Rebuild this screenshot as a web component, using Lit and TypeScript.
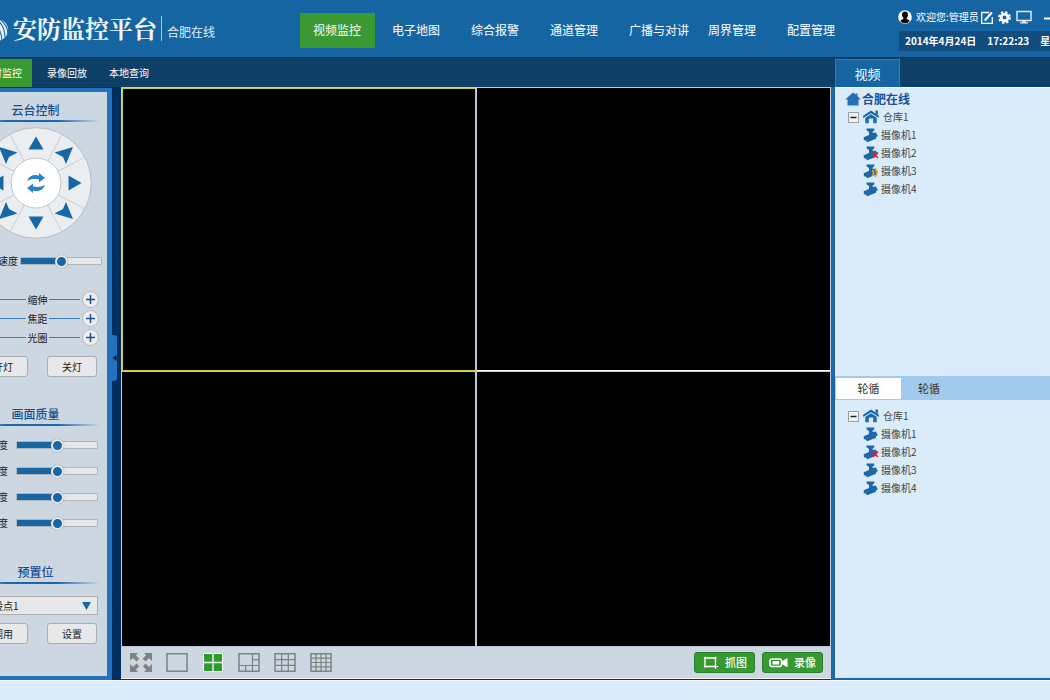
import { LitElement, html, svg, css, nothing } from "lit";
import { customElement, property, state } from "lit/decorators.js";
import { classMap } from "lit/directives/class-map.js";
import { styleMap } from "lit/directives/style-map.js";

const NAV = ["视频监控", "电子地图", "综合报警", "通道管理", "广播与对讲", "周界管理", "配置管理"];
const SUBNAV = ["实时监控", "录像回放", "本地查询"];

type CameraStatus = "ok" | "offline" | "alarm";
interface Camera {
  name: string;
  status: CameraStatus;
}

const LIVE: Camera[] = [
  { name: "摄像机1", status: "ok" },
  { name: "摄像机2", status: "offline" },
  { name: "摄像机3", status: "alarm" },
  { name: "摄像机4", status: "ok" },
];
const PATROL: Camera[] = [
  { name: "摄像机1", status: "ok" },
  { name: "摄像机2", status: "offline" },
  { name: "摄像机3", status: "ok" },
  { name: "摄像机4", status: "ok" },
];

const reset = css`
  * {
    box-sizing: border-box;
  }
  button {
    margin: 0;
    padding: 0;
    border: 0;
    background: none;
    font: inherit;
    color: inherit;
    cursor: pointer;
  }
  a {
    color: inherit;
    text-decoration: none;
  }
  svg {
    display: block;
    flex: none;
  }
`;

@customElement("app-header")
class AppHeader extends LitElement {
  @state() active = 0;

  static styles = [
    reset,
    css`
      :host {
        display: grid;
        grid-template-columns: 340px 1fr 212px;
        height: 57px;
        background: #1665a3;
        color: #fff;
      }
      .brand {
        display: flex;
        align-items: flex-start;
        padding: 16px 0 0 28px;
      }
      .logo {
        margin: 2px 4px 0 0;
      }
      .title {
        margin: 0;
        font: 700 24px/24px "Noto Serif CJK SC", "Noto Sans CJK SC", sans-serif;
        color: #eef5fb;
        white-space: nowrap;
      }
      .site {
        margin-left: 4px;
        padding: 8px 0 0 5px;
        height: 25px;
        border-left: 1px solid #a9c9e3;
        font-size: 12px;
        line-height: 16px;
        color: #e2eef8;
        white-space: nowrap;
      }
      .nav {
        display: flex;
        gap: 4px;
        padding-top: 13px;
      }
      .nav a {
        flex: none;
        width: 75px;
        height: 35px;
        padding-left: 13px;
        font-size: 12px;
        line-height: 33px;
        white-space: nowrap;
      }
      .nav a.on {
        background: #3a9933;
      }
      .user {
        display: flex;
        align-items: center;
        height: 16px;
        margin-top: 9px;
        font-size: 10px;
        line-height: 16px;
        white-space: nowrap;
      }
      .hello {
        width: 65px;
        margin-left: 4px;
      }
      .tools {
        display: flex;
        align-items: center;
        gap: 5px;
      }
      .clock {
        display: flex;
        gap: 11px;
        margin: 6px 0 0 1px;
        padding-left: 6px;
        height: 20px;
        background: #134d7f;
        font-size: 10px;
        font-weight: 700;
        line-height: 20px;
        white-space: nowrap;
      }
    `,
  ];

  render() {
    return html`
      <div class="brand">
        <svg class="logo" width="21" height="23" viewBox="0 0 21 23">
          <circle cx="9" cy="12" r="11" fill="#e8f2fa" />
          <path d="M-2 2C8 4 13 10 14 23M3-1C12 3 17 8 17 20M-2 8C5 9 9 14 10 24M9-1C15 3 20 8 20 16" fill="none" stroke="#1665a3" stroke-width="1.100" />
        </svg>
        <h1 class="title">安防监控平台</h1>
        <span class="site">合肥在线</span>
      </div>
      <nav class="nav">
        ${NAV.map(
          (n, i) => html`<a href="#" class=${classMap({ on: i === this.active })} @click=${(e: Event) => { e.preventDefault(); this.active = i; }}>${n}</a>`
        )}
      </nav>
      <div>
        <div class="user">
          <svg width="14" height="14" viewBox="0 0 14 14">
            <circle cx="7" cy="7" r="6.8" fill="#fff" />
            <path d="M7 1.6c2.2 0 3.2 1.4 3 3.4-.1 1.3-.8 2.3-1.3 3v1c1.400.5 2.500 1 3 2.100A6.200 6.200 0 0 1 7 13.300 6.200 6.200 0 0 1 2.300 11.100c.5-1.100 1.600-1.600 3-2.100v-1C4.800 7.300 4.100 6.300 4 5c-.2-2 .8-3.400 3-3.400z" fill="#0a0a0a" />
          </svg>
          <span class="hello">欢迎您:管理员</span>
          <div class="tools">
            <button aria-label="编辑">
              <svg width="12" height="13" viewBox="0 0 12 13" fill="none" stroke="#fff">
                <path d="M8 1.500H.7V12.300H11.300V6" stroke-width="1.300" />
                <path d="M3.800 9.500L10.800 1.500" stroke-width="2.200" />
              </svg>
            </button>
            <button aria-label="设置">
              <svg width="13" height="13" viewBox="0 0 13 13">
                <circle cx="6.500" cy="6.500" r="3.400" fill="none" stroke="#fff" stroke-width="2.800" />
                <circle cx="6.500" cy="6.500" r="5.400" fill="none" stroke="#fff" stroke-width="2" stroke-dasharray="2.300 1.940" />
              </svg>
            </button>
            <button aria-label="显示">
              <svg width="16" height="14" viewBox="0 0 16 14">
                <path d="M1 1.500H15V10.500H1Z" fill="none" stroke="#dfeaf4" stroke-width="1.500" />
                <path d="M6 11H10V12.300H12V13.500H4V12.300H6Z" fill="#dfeaf4" />
              </svg>
            </button>
            <button aria-label="最小化">
              <svg width="18" height="14" viewBox="0 0 18 14"><path d="M7 8.500H17" stroke="#fff" stroke-width="2" /></svg>
            </button>
          </div>
        </div>
        <div class="clock"><span>2014年4月24日</span><span>17:22:23</span><span>星期四</span></div>
      </div>
    `;
  }
}

@customElement("ptz-panel")
class PtzPanel extends LitElement {
  static styles = [
    reset,
    css`
      :host {
        display: block;
        width: 152px;
        border: solid #2272be;
        border-width: 4px 5px 4px 4px;
        background: #cdd7e2;
        color: #222;
        font-size: 10px;
      }
      .title {
        margin: 0;
        height: 20px;
        font-size: 12px;
        font-weight: 500;
        line-height: 16px;
        text-align: center;
        color: #1c4f8c;
        background: linear-gradient(90deg, transparent 4%, #1b66a8 30%, #1b66a8 65%, transparent 95%) bottom / 100% 2px no-repeat;
      }
      .ptz {
        height: 308px;
        padding-top: 10px;
      }
      .quality {
        height: 159px;
        padding-top: 6px;
      }
      .preset {
        padding-top: 5px;
      }
      .dial {
        display: grid;
        grid-template: 37px 38px 37px / 37px 38px 37px;
        width: 112px;
        margin: 5px auto 0;
      }
      .face {
        grid-area: 1 / 1 / 4 / 4;
      }
      .a0 { grid-area: 1 / 1; place-self: end; }
      .a1 { grid-area: 1 / 2; place-self: start center; margin-top: 9px; }
      .a2 { grid-area: 1 / 3; place-self: end start; }
      .a3 { grid-area: 2 / 1; place-self: center start; margin-left: 9px; }
      .a4 { grid-area: 2 / 2; place-self: center; }
      .a5 { grid-area: 2 / 3; place-self: center end; margin-right: 9px; }
      .a6 { grid-area: 3 / 1; place-self: start end; }
      .a7 { grid-area: 3 / 2; place-self: end center; margin-bottom: 9px; }
      .a8 { grid-area: 3 / 3; place-self: start; }
      .slide {
        display: grid;
        grid-template-columns: 44px 82px;
        column-gap: 8px;
        align-items: center;
        height: 26px;
        line-height: 14px;
      }
      .slide span {
        text-align: right;
      }
      .speed {
        grid-template-columns: 54px 82px;
        column-gap: 2px;
        margin-top: 9px;
      }
      .slides {
        padding-top: 6px;
      }
      input {
        -webkit-appearance: none;
        appearance: none;
        width: 82px;
        height: 14px;
        margin: 0;
        background: none;
      }
      input::-webkit-slider-runnable-track {
        height: 8px;
        border: 1px solid #b2b5b8;
        border-radius: 1px;
        background: linear-gradient(90deg, #1766a6 var(--level), #e6e7e8 var(--level));
      }
      input::-webkit-slider-thumb {
        -webkit-appearance: none;
        width: 13px;
        height: 13px;
        margin-top: -3px;
        border: 2px solid #e9eaeb;
        border-radius: 50%;
        background: #1766a6;
        box-shadow: 0 0 1px #777;
      }
      .lens {
        margin-top: 16px;
      }
      .step {
        display: grid;
        grid-template-columns: 17px 1fr 20px 1fr 17px;
        align-items: center;
        height: 19px;
        padding: 0 8px 0 12px;
        line-height: 16px;
        text-align: center;
      }
      .step i {
        height: 1px;
        margin: 0 2px 0 1px;
        background: #3a7cb8;
      }
      .round {
        width: 17px;
        height: 17px;
        border: 1px solid #b5b8bc;
        border-radius: 50%;
        background: #eceded;
      }
      .round svg {
        margin: auto;
      }
      .pair {
        display: flex;
        justify-content: space-between;
        padding: 0 10px 0 14px;
      }
      .btn {
        width: 50px;
        height: 21px;
        border: 1px solid #a9acb0;
        border-radius: 3px;
        background: #e7e8e9;
        line-height: 19px;
      }
      .lens + .pair {
        margin-top: 9px;
      }
      .pick {
        display: grid;
        margin: 12px 9px 8px 14px;
      }
      .pick svg {
        grid-area: 1 / 1;
        place-self: center end;
        margin-right: 7px;
        pointer-events: none;
      }
      select {
        grid-area: 1 / 1;
        -webkit-appearance: none;
        appearance: none;
        height: 19px;
        padding: 0 4px;
        border: 1px solid #b3aead;
        border-radius: 0;
        background: #e7e8e9;
        font: inherit;
        line-height: 17px;
        color: #222;
      }
    `,
  ];

  private arrow(i: number) {
    const names = ["左上", "上", "右上", "左", "复位", "右", "左下", "下", "右下"];
    const diagonal: Record<number, string> = { 0: "scale(-1 1)", 2: "", 6: "scale(-1 -1)", 8: "scale(1 -1)" };
    const straight: Record<number, number> = { 1: 0, 5: 90, 7: 180, 3: 270 };
    let shape;
    if (i === 4) {
      shape = svg`<path d="M-9-2C-7-8-1-9 3-7.500V-10L9-5 3-.8V-3.500C-2-4.500-5-4-9-2Z" fill="#2a82c8"/><path d="M9 2C7 8 1 9-3 7.500V10L-9 5-3 .8V3.500C2 4.500 5 4 9 2Z" fill="#2a82c8"/>`;
    } else if (i in straight) {
      shape = svg`<path transform="rotate(${straight[i]})" d="M0-6.500L7.500 6.500H-7.500Z" fill="#1766a6"/>`;
    } else {
      shape = svg`<path transform=${diagonal[i]} d="M9-8L-9.500-2.500-1 2 2 9Z" fill="#1766a6"/>`;
    }
    const w = i === 4 ? 20 : i % 2 ? 16 : 18;
    const h = i === 4 ? 20 : i % 2 ? 14 : 18;
    return html`<button class="a${i}" aria-label=${names[i]}>
      <svg width=${w} height=${h} viewBox="${-w / 2} ${-h / 2} ${w} ${h}" overflow="visible">${shape}</svg>
    </button>`;
  }

  private slider(label: string, level: number, cls = "") {
    return html`<label class="slide ${cls}"><span>${label}</span><input type="range" .value=${String(level)} style=${styleMap({ "--level": `${level}%` })} /></label>`;
  }

  private step(label: string) {
    return html`<div class="step">
      <button class="round" aria-label="${label}减"><svg width="9" height="9" viewBox="0 0 9 9"><path d="M0 4.500H9" stroke="#1a4f8c" stroke-width="1.500" /></svg></button>
      <i></i><span>${label}</span><i></i>
      <button class="round" aria-label="${label}加"><svg width="9" height="9" viewBox="0 0 9 9"><path d="M0 4.500H9M4.500 0V9" stroke="#1a4f8c" stroke-width="1.500" /></svg></button>
    </div>`;
  }

  render() {
    const spokes = [28, 62, 118, 152, 208, 242, 298, 332];
    return html`
      <section class="ptz">
        <h2 class="title">云台控制</h2>
        <div class="dial">
          <svg class="face" width="112" height="112" viewBox="-56 -56 112 112">
            <circle r="55.300" fill="#ebeef0" stroke="#b9bdc0" />
            ${spokes.map((a) => svg`<path transform="rotate(${a})" d="M25 0H55" stroke="#cdd0d3"/>`)}
            <circle r="25" fill="#fff" stroke="#c3c6c9" />
          </svg>
          ${[0, 1, 2, 3, 4, 5, 6, 7, 8].map((i) => this.arrow(i))}
        </div>
        ${this.slider("速度", 50, "speed")}
        <div class="lens">${["缩伸", "焦距", "光圈"].map((s) => this.step(s))}</div>
        <div class="pair"><button class="btn">开灯</button><button class="btn">关灯</button></div>
      </section>
      <section class="quality">
        <h2 class="title">画面质量</h2>
        <div class="slides">${["亮度", "对比度", "饱和度", "色度"].map((s) => this.slider(s, 50))}</div>
      </section>
      <section class="preset">
        <h2 class="title">预置位</h2>
        <div class="pick">
          <select aria-label="预置位"><option>预设点1</option><option>预设点2</option></select>
          <svg width="9" height="8" viewBox="0 0 9 8"><path d="M0 0H9L4.500 8Z" fill="#1766a6" /></svg>
        </div>
        <div class="pair"><button class="btn">调用</button><button class="btn">设置</button></div>
      </section>
    `;
  }
}

@customElement("video-wall")
class VideoWall extends LitElement {
  @state() selected = 0;

  static styles = [
    reset,
    css`
      :host {
        display: grid;
        grid-template-rows: 1fr 33px;
        min-width: 0;
      }
      .wall {
        display: grid;
        grid-template: 284fr 274fr / 354fr 353fr;
        gap: 1px;
        padding: 1px;
        background: #c4c6dc;
      }
      .pane {
        background: #000;
        border: 0 solid #c4c6dc;
      }
      .pane:nth-child(2) {
        border-bottom: 1px solid #fff;
      }
      .pane:nth-child(3) {
        border-right-width: 1px;
      }
      .pane.on {
        border: 1px solid #d2cf3a;
      }
      .bar {
        display: flex;
        align-items: center;
        gap: 14px;
        padding: 0 8px 1px 9px;
        border-bottom: 1px solid #1c2a5c;
        background: #cdd7e2;
        box-shadow: inset 0 -1px #f0f4f8;
      }
      .spacer {
        flex: 1;
      }
      .act {
        display: flex;
        align-items: center;
        width: 61px;
        height: 21px;
        padding-left: 8px;
        gap: 6px;
        border: 1px solid #25802a;
        border-radius: 3px;
        background: #37992f;
        color: #fff;
        font-size: 11px;
        font-weight: 500;
        line-height: 19px;
        white-space: nowrap;
      }
      .act + .act {
        margin-left: -7px;
        padding-left: 6px;
        gap: 5px;
      }
    `,
  ];

  private layoutIcon(label: string, d: string) {
    return html`<button aria-label=${label}>
      <svg width="22" height="19" viewBox="0 0 22 19" fill="none" stroke="#7f8182" stroke-width="1.200"><path d="M1 .8H21V18.200H1Z" stroke-width="1.500" /><path d=${d} /></svg>
    </button>`;
  }

  render() {
    const corner = "M0 0H8L5.800 2.300 9.200 5.700 6.500 8.400 2.900 5 0 8Z";
    return html`
      <div class="wall">
        ${[0, 1, 2, 3].map(
          (i) => html`<button class=${classMap({ pane: true, on: i === this.selected })} aria-label="画面${i + 1}" @click=${() => (this.selected = i)}></button>`
        )}
      </div>
      <div class="bar">
        <button aria-label="全屏">
          <svg width="22" height="19" viewBox="0 0 22 19" fill="#7f8182">
            <path d=${corner} /><path transform="translate(22 0) scale(-1 1)" d=${corner} />
            <path transform="translate(0 19) scale(1 -1)" d=${corner} /><path transform="translate(22 19) scale(-1 -1)" d=${corner} />
          </svg>
        </button>
        ${this.layoutIcon("单画面", "")}
        <button aria-label="四画面">
          <svg width="22" height="19" viewBox="0 0 22 19"><path d="M1 0H21V19H1Z" fill="#f4faf4" /><path d="M2 1H10.300V8.800H2ZM11.700 1H20V8.800H11.700ZM2 10.200H10.300V18H2ZM11.700 10.200H20V18H11.700Z" fill="#2f9a2c" /></svg>
        </button>
        ${this.layoutIcon("六画面", "M14.500 1V18M1 12.500H21M14.500 6.700H21M7.700 12.500V18")}
        ${this.layoutIcon("九画面", "M7.700 1V18M14.300 1V18M1 6.700H21M1 12.400H21")}
        ${this.layoutIcon("十六画面", "M6 1V18M11 1V18M16 1V18M1 5.200H21M1 9.500H21M1 13.800H21")}
        <span class="spacer"></span>
        <button class="act">
          <svg width="16" height="13" viewBox="0 0 16 13" fill="none" stroke="#fff"><path d="M2 2H12.500V10.500H2Z" stroke-width="1.300" /><path d="M.8 2H3.200M2 .8V3.200M11.300 2H13.700M12.500 .8V3.200M.8 10.500H3.200M2 9.300V11.700M10 10.500H15M12.500 8V13" stroke-width="1.200" /></svg>
          抓图
        </button>
        <button class="act">
          <svg width="20" height="11" viewBox="0 0 20 11"><rect x="1" y="2" width="11.500" height="7.500" rx="2" fill="none" stroke="#fff" stroke-width="1.600" /><rect x="3.500" y="4" width="6.500" height="3.500" fill="#fff" /><path d="M12.500 4.500L18.500 1V10.300L12.500 7Z" fill="#fff" /></svg>
          录像
        </button>
      </div>
    `;
  }
}

@customElement("camera-tree")
class CameraTree extends LitElement {
  @property({ attribute: false }) cameras: Camera[] = [];
  @property() root = "";
  @state() open = true;

  static styles = [
    reset,
    css`
      :host {
        display: block;
        font-size: 10px;
        line-height: 18px;
        color: #444;
        white-space: nowrap;
      }
      .row {
        display: flex;
        align-items: center;
        height: 18px;
      }
      .root {
        padding-left: 10px;
        gap: 1px;
        font-size: 12px;
        font-weight: 700;
        color: #1c4f96;
      }
      .group {
        padding-left: 13px;
        gap: 4px;
      }
      .toggle {
        width: 11px;
        height: 11px;
        border: 1px solid #98a0a8;
        background: #f3f3f1;
      }
      .list {
        margin: 0;
        padding: 0;
        list-style: none;
      }
      .cam {
        padding-left: 28px;
        gap: 2px;
      }
    `,
  ];

  private cameraIcon(status: CameraStatus) {
    return html`<svg width="16" height="15" viewBox="0 0 16 15">
      <path d="M3.500 .5H11.300V2.300L9.600 3.800V5L12.800 4.600 14.800 8 13 9.400 13 10.800 4.200 14.200 2.800 12.600.9 12.200.7 9.300 6 7V4L3.500 2.300Z" fill="#1c68a8" />
      ${status === "offline" ? svg`<path d="M9.500 6.500L15 12M15 6.500L9.500 12" stroke="#e8202a" stroke-width="1.700"/>` : nothing}
      ${status === "alarm" ? svg`<path d="M9.500 6Q11.800 9 9.500 12M12 4.500Q16 9 12 13" fill="none" stroke="#eea521" stroke-width="1.700"/>` : nothing}
    </svg>`;
  }

  render() {
    return html`
      ${this.root
        ? html`<div class="row root">
            <svg width="16" height="14" viewBox="0 0 16 14"><path d="M8 .5L10.500 2.500V1.500H12.500V4L15.800 7.500H13.500V13.500H2.500V7.500H.2Z" fill="#2371b4" /></svg>
            <span>${this.root}</span>
          </div>`
        : nothing}
      <div class="row group">
        <button class="toggle" aria-label="展开或收起" aria-expanded=${this.open} @click=${() => (this.open = !this.open)}>
          <svg width="9" height="9" viewBox="0 0 9 9"><path d="M1.500 4.500H7.500" stroke="#222" stroke-width="1.500" /></svg>
        </button>
        <svg width="16" height="14" viewBox="0 0 16 14" fill="#1c68a8"><path d="M8 .5L15.900 5.800V8L8 3.200.1 8V5.800Z" /><path d="M12.500 .5H14.900V5L12.500 3.400Z" /><path d="M2.300 7.700L8 4.200 13.700 7.700V13.300H10.200V8.500H5.800V13.300H2.300Z" /></svg>
        <span>仓库1</span>
      </div>
      ${this.open
        ? html`<ul class="list">${this.cameras.map((c) => html`<li class="row cam">${this.cameraIcon(c.status)}<span>${c.name}</span></li>`)}</ul>`
        : nothing}
    `;
  }
}

@customElement("app-root")
class AppRoot extends LitElement {
  static styles = [
    reset,
    css`
      :host {
        display: block;
        overflow: hidden;
        font-family: "Noto Sans CJK SC", sans-serif;
        background: #daecfa;
      }
      .shell {
        display: grid;
        grid-template-rows: auto auto 1fr 20px;
        min-height: 100vh;
        margin: 0 -60px 0 -40px;
      }
      .cols {
        display: grid;
        grid-template-columns: 161px 1fr 279px;
      }
      .sub {
        height: 30px;
        padding-top: 1px;
        background: #0e4067;
        border-top: 1px solid #0c3558;
        color: #fff;
      }
      .subnav {
        grid-column: 1 / 3;
        display: flex;
        padding-left: 2px;
        font-size: 10px;
        line-height: 27px;
      }
      .subnav a {
        padding: 0 11px;
      }
      .subnav a.on {
        width: 70px;
        margin-right: 4px;
        padding: 0 10px 0 20px;
        background: #3a9933;
      }
      .tab {
        justify-self: start;
        width: 65px;
        margin-left: 4px;
        border: solid #2f7dbd;
        border-width: 1px 1px 0;
        background: #1665a3;
        font-size: 13px;
        line-height: 26px;
      }
      .side {
        display: flex;
        padding-top: 1px;
        background: #002f5f;
      }
      .gutter {
        width: 9px;
        padding-top: 247px;
      }
      .handle {
        display: flex;
        align-items: center;
        width: 5px;
        height: 46px;
        border-radius: 0 3px 3px 0;
        background: #2272be;
      }
      .right {
        display: grid;
        grid-template-rows: 290fr 303fr;
        border: solid #1a68a8;
        border-width: 0 0 2px 4px;
        background: #daecfa;
        color: #333;
      }
      .live {
        padding-top: 2px;
        border-top: 1px solid #f2f8fd;
      }
      .tabs {
        display: flex;
        height: 24px;
        padding: 2px 0 1px 1px;
        background: #a1caec;
        font-size: 11px;
        line-height: 21px;
      }
      .tabs button {
        width: 65px;
      }
      .tabs button:first-child {
        background: #fff;
      }
      .tabs button:last-child {
        width: 56px;
      }
      .patrol {
        padding-top: 7px;
      }
      .foot {
        border-top: 1px solid #f4f9fd;
        background: #daecfa;
      }
    `,
  ];

  render() {
    return html`
      <div class="shell">
        <app-header></app-header>
        <div class="cols sub">
          <nav class="subnav">${SUBNAV.map((s, i) => html`<a href="#" class=${classMap({ on: i === 0 })}>${s}</a>`)}</nav>
          <button class="tab">视频</button>
        </div>
        <main class="cols">
          <div class="side">
            <ptz-panel></ptz-panel>
            <div class="gutter">
              <button class="handle" aria-label="收起面板"><svg width="5" height="6" viewBox="0 0 5 6"><path d="M4.500 0V6L.8 3Z" fill="#111" /></svg></button>
            </div>
          </div>
          <video-wall></video-wall>
          <aside class="right">
            <camera-tree class="live" root="合肥在线" .cameras=${LIVE}></camera-tree>
            <div>
              <div class="tabs"><button>轮循</button><button>轮循</button></div>
              <camera-tree class="patrol" .cameras=${PATROL}></camera-tree>
            </div>
          </aside>
        </main>
        <footer class="foot"></footer>
      </div>
    `;
  }
}
